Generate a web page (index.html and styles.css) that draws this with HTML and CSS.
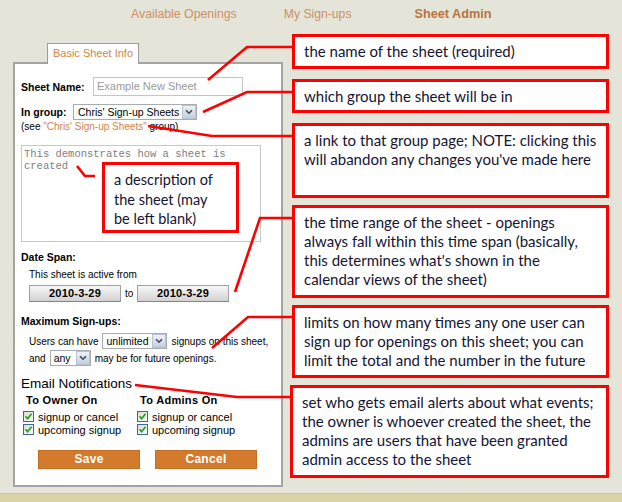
FILE: index.html
```html
<!DOCTYPE html>
<html>
<head>
<meta charset="utf-8">
<title>Sheet Admin</title>
<link rel="stylesheet" href="styles.css">
</head>
<body>
<header class="nav">
  <a class="nav-link n1">Available Openings</a>
  <a class="nav-link n2">My Sign-ups</a>
  <a class="nav-link n3">Sheet Admin</a>
</header>
<main class="main">
  <section class="left">
    <div class="tab">Basic Sheet Info</div>
    <div class="panel">
      <div class="row name-row">
        <span class="lbl name-lbl">Sheet Name:</span>
        <div class="input">Example New Sheet</div>
      </div>
      <div class="row group-row">
        <span class="lbl group-lbl">In group:</span>
        <div class="select sel-group"><span class="sel-text">Chris' Sign-up Sheets</span><span class="sel-btn"><svg width="8" height="6" viewBox="0 0 8 6"><path d="M1 1.2 L4 4.2 L7 1.2" fill="none" stroke="#3c4a66" stroke-width="1.6"/></svg></span></div>
      </div>
      <div class="see">(see <a class="link">"Chris' Sign-up Sheets"</a> group)</div>
      <div class="desc-wrap">
        <div class="textarea">This demonstrates how a sheet is created</div>
        <div class="desc-note">a description of<br>the sheet (may<br>be left blank)</div>
      </div>
      <div class="lbl section date-title">Date Span:</div>
      <div class="sub active-from">This sheet is active from</div>
      <div class="row date-row">
        <span class="date-btn">2010-3-29</span>
        <span class="to">to</span>
        <span class="date-btn">2010-3-29</span>
      </div>
      <div class="lbl section max-title">Maximum Sign-ups:</div>
      <div class="row sub-row users-row">
        <span>Users can have</span>
        <div class="select sel-unl"><span class="sel-text">unlimited</span><span class="sel-btn"><svg width="8" height="6" viewBox="0 0 8 6"><path d="M1 1.2 L4 4.2 L7 1.2" fill="none" stroke="#3c4a66" stroke-width="1.6"/></svg></span></div>
        <span>signups on this sheet,</span>
      </div>
      <div class="row sub-row and-row">
        <span>and</span>
        <div class="select sel-any"><span class="sel-text">any</span><span class="sel-btn"><svg width="8" height="6" viewBox="0 0 8 6"><path d="M1 1.2 L4 4.2 L7 1.2" fill="none" stroke="#3c4a66" stroke-width="1.6"/></svg></span></div>
        <span>may be for future openings.</span>
      </div>
      <div class="email-title">Email Notifications</div>
      <div class="notif-grid">
        <div class="notif-head">To Owner On</div>
        <div class="notif-head">To Admins On</div>
        <div class="chk-row"><span class="cb"><svg width="9" height="9" viewBox="0 0 9 9"><path d="M1.5 4.2 L3.6 6.6 L7.6 1.8" fill="none" stroke="#22a322" stroke-width="1.7"/></svg></span>signup or cancel</div>
        <div class="chk-row"><span class="cb"><svg width="9" height="9" viewBox="0 0 9 9"><path d="M1.5 4.2 L3.6 6.6 L7.6 1.8" fill="none" stroke="#22a322" stroke-width="1.7"/></svg></span>signup or cancel</div>
        <div class="chk-row"><span class="cb"><svg width="9" height="9" viewBox="0 0 9 9"><path d="M1.5 4.2 L3.6 6.6 L7.6 1.8" fill="none" stroke="#22a322" stroke-width="1.7"/></svg></span>upcoming signup</div>
        <div class="chk-row"><span class="cb"><svg width="9" height="9" viewBox="0 0 9 9"><path d="M1.5 4.2 L3.6 6.6 L7.6 1.8" fill="none" stroke="#22a322" stroke-width="1.7"/></svg></span>upcoming signup</div>
      </div>
      <div class="row actions">
        <span class="btn">Save</span>
        <span class="btn">Cancel</span>
      </div>
    </div>
  </section>
  <section class="right">
    <div class="note b1">the name of the sheet (required)</div>
    <div class="note b2">which group the sheet will be in</div>
    <div class="note b3">a link to that group page; NOTE: clicking this<br>will abandon any changes you've made here</div>
    <div class="note b4">the time range of the sheet - openings<br>always fall within this time span (basically,<br>this determines what's shown in the<br>calendar views of the sheet)</div>
    <div class="note b5">limits on how many times any one user can<br>sign up for openings on this sheet; you can<br>limit the total and the number in the future</div>
    <div class="note b6">set who gets email alerts about what events;<br>the owner is whoever created the sheet, the<br>admins are users that have been granted<br>admin access to the sheet</div>
  </section>
</main>
<footer class="footer"></footer>
<svg class="leaders" width="622" height="502" viewBox="0 0 622 502">
  <g fill="none" stroke="#ff0000" stroke-width="2.6" stroke-linejoin="miter">
    <polyline points="208,80 247,47 293,47"/>
    <polyline points="203,112 247,92 293,92"/>
    <polyline points="148,126 212,136 293,136"/>
    <polyline points="77,166 85,176 95,176"/>
    <polyline points="235,292 260,218 293,218"/>
    <polyline points="212,348 248,317 293,317"/>
    <polyline points="135,385 237,397 293,397"/>
  </g>
</svg>
</body>
</html>
```

FILE: styles.css
```css
* { box-sizing: border-box; margin: 0; padding: 0; }
html, body { width: 622px; height: 502px; overflow: hidden; }
body {
  background: #e5e4d8;
  font-family: "Liberation Sans", Arial, sans-serif;
  color: #000;
  position: relative;
}

/* top nav */
.nav {
  height: 34px;
  display: flex;
  align-items: flex-start;
  padding-top: 7px;
  padding-left: 131px;
  font-size: 12px;
  line-height: 14px;
}
.nav-link { color: #cc9166; text-decoration: none; }
.n1 { font-size: 12.3px; }
.n2 { margin-left: 47px; font-size: 12.2px; }
.n3 { margin-left: 63px; font-weight: bold; color: #b87440; font-size: 12.7px; }

.main { display: flex; height: 459px; }

/* left form */
.left {
  margin-left: 13px;
  width: 270px;
  padding-top: 9px;
  display: flex;
  flex-direction: column;
}
.tab {
  margin-left: 34px;
  width: 92px;
  height: 21px;
  border: 1px solid #9c9c9c;
  border-bottom: none;
  background: #fff;
  color: #d2844a;
  font-size: 11px;
  line-height: 19px;
  text-align: center;
  position: relative;
  z-index: 1;
  margin-bottom: -2px;
}
.panel {
  background: #fff;
  border: 2px solid #a4a4a4;
  height: 425px;
  padding-left: 6px;
  display: flex;
  flex-direction: column;
  font-size: 10px;
}
.row { display: flex; align-items: center; }
.lbl { font-weight: bold; font-size: 10.5px; }
.name-row { margin-top: 13px; height: 19px; }
.name-lbl { width: 72px; }
.input {
  width: 150px;
  height: 19px;
  border: 1px solid #c4c4c4;
  padding-left: 3px;
  font-size: 11px;
  line-height: 17px;
  color: #9a9a9a;
}
.group-row { margin-top: 8px; height: 16px; }
.group-lbl { width: 52px; }

.select {
  display: flex;
  align-items: center;
  height: 16px;
  border: 1px solid #a5acb2;
  background: #fff;
  font-size: 10.5px;
}
.sel-text { flex: 1; padding-left: 4px; line-height: 14px; white-space: nowrap; }
.sel-btn {
  width: 14px;
  height: 14px;
  border: 1px solid #b8c2d2;
  background: linear-gradient(#eef1f6, #c5cedc);
  display: flex;
  align-items: center;
  justify-content: center;
}
.sel-group { width: 124px; }
.sel-unl { width: 65px; }
.sel-unl .sel-text { padding-left: 3px; }
.sel-any { width: 41px; }
.sel-any .sel-text { padding-left: 3px; }

.see { margin-top: 1px; line-height: 12px; font-size: 10px; }
.link { color: #d2844a; text-decoration: none; }

.desc-wrap { position: relative; margin-top: 12px; width: 240px; height: 97px; }
.textarea {
  width: 240px;
  height: 97px;
  border: 1px solid #c8c8c8;
  padding: 2px 2px 0 2px;
  font-family: "Liberation Mono", "Courier New", monospace;
  font-size: 10.5px;
  line-height: 12px;
  color: #808080;
}
.desc-note {
  position: absolute;
  left: 81px;
  top: 17px;
  width: 137px;
  height: 71px;
  border: 3px solid #ff0000;
  background: #fff;
  padding: 5px 0 0 9px;
  font-family: Lato, "Open Sans", sans-serif;
  font-size: 14.5px;
  line-height: 19.5px;
  color: #141432;
  white-space: nowrap;
}

.section { line-height: 13px; }
.date-title { margin-top: 9px; }
.sub { padding-left: 8px; line-height: 13px; font-size: 10px; }
.active-from { margin-top: 4px; }
.date-row { margin-top: 4px; padding-left: 8px; height: 17px; gap: 4px; }
.date-btn {
  width: 92px;
  height: 17px;
  border: 1px solid #a0a0a0;
  border-bottom-color: #858585;
  background: linear-gradient(#f7f7f7, #d2d2d2);
  font-weight: bold;
  font-size: 11px;
  line-height: 15px;
  text-align: center;
  letter-spacing: 0.2px;
}
.to { font-size: 10px; width: 8px; }
.max-title { margin-top: 13px; }
.sub-row { padding-left: 8px; height: 16px; gap: 4px; font-size: 10px; white-space: nowrap; }
.users-row { margin-top: 5px; }
.and-row { margin-top: 1px; }

.email-title { margin-top: 10px; font-size: 13.5px; line-height: 15px; }
.notif-grid {
  margin-top: 3px;
  padding-left: 2px;
  display: grid;
  grid-template-columns: 114px 1fr;
  grid-template-rows: 13px 15px 15px;
  font-size: 11px;
}
.notif-head { font-weight: bold; padding-left: 3px; line-height: 13px; height: 13px; letter-spacing: 0.3px; }
.chk-row { display: flex; align-items: center; height: 15px; white-space: nowrap; }
.notif-grid .chk-row:nth-child(3), .notif-grid .chk-row:nth-child(4) { margin-top: 2px; }
.cb {
  width: 11px;
  height: 11px;
  border: 1px solid #3f6894;
  background: linear-gradient(135deg, #dcdcd6, #fbfbfb);
  display: flex;
  align-items: center;
  justify-content: center;
  margin-right: 4px;
}

.actions { margin-top: 13px; padding-left: 17px; gap: 15px; }
.btn {
  width: 102px;
  height: 19px;
  background: #d47a2c;
  border: 1px solid #c76d22;
  color: #fff;
  font-weight: bold;
  font-size: 12px;
  line-height: 17px;
  text-align: center;
  letter-spacing: 0.3px;
}

/* right callouts */
.right { margin-left: 9px; width: 317px; display: flex; flex-direction: column; }
.note {
  border: 3px solid #ff0000;
  background: #fff;
  padding: 5px 0 0 9px;
  font-family: Lato, "Open Sans", sans-serif;
  font-size: 15px;
  line-height: 19px;
  color: #141432;
  white-space: nowrap;
}
.b1 { height: 35px; }
.b2 { height: 34px; margin-top: 10px; }
.b3 { height: 75px; margin-top: 10px; }
.b4 { height: 93px; margin-top: 7px; }
.b5 { height: 73px; margin-top: 7px; }
.b6 { height: 93px; margin-top: 7px; margin-left: -2px; width: 319px; }

.footer { height: 9px; border-top: 1px solid #c4c3b3; background: #d9d3a7; }

.leaders { position: absolute; left: 0; top: 0; pointer-events: none; }
```
